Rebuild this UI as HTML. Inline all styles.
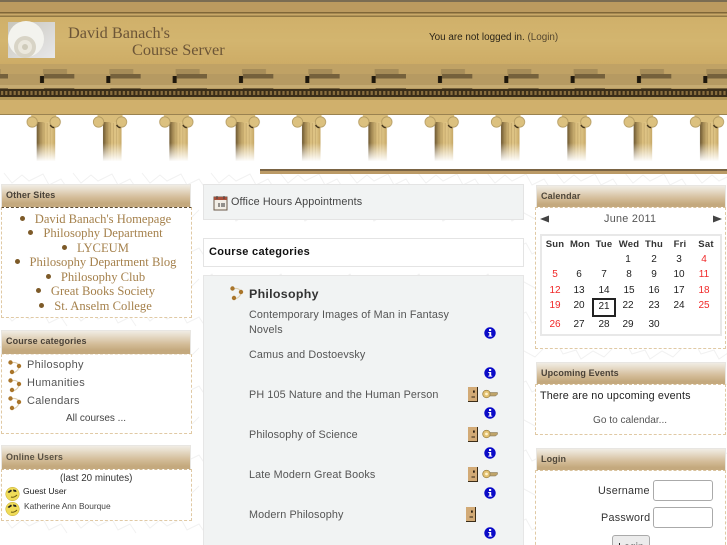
<!DOCTYPE html>
<html><head><meta charset="utf-8"><title>David Banach's Course Server</title>
<style>
html,body{margin:0;padding:0;background:#fff}
body{width:727px;height:545px;overflow:hidden;position:relative;font-family:"Liberation Sans",sans-serif;color:#222}
#p{position:absolute;left:0;top:0;width:727px;height:545px;overflow:hidden;filter:blur(.35px)}
.a{position:absolute}
.t{position:absolute;white-space:nowrap;line-height:14px}
.h{position:absolute;background:linear-gradient(#f0ece4 0,#e9e0d0 15%,#d3bc98 55%,#c4a97e 80%,#c4a97e 100%);border:1px solid #e8e6e2;border-bottom:0;box-sizing:border-box;font-weight:bold;font-size:9px;letter-spacing:.12px;color:#4a4238;padding-left:4px;line-height:21px}
.b{position:absolute;background:#fff;border:1px dashed #e0c9a4;border-top:1px dashed #5a4a32;box-sizing:border-box}
.c{font-family:"Liberation Serif",serif;font-size:12.6px;color:#a5814c;text-align:center;width:190px;left:.5px}
.c i{display:inline-block;width:5px;height:5px;border-radius:50%;background:#7d5a28;margin-right:10px;vertical-align:2px}
.g{font-size:11px;color:#555;letter-spacing:.3px}
.m{font-size:10.8px;letter-spacing:.12px;color:#555}
.d{position:absolute;font-size:10px;color:#222;width:24px;text-align:center;line-height:12px}
.d.w{font-size:9.5px}
.r{color:#f02828}
.w{font-weight:bold;color:#333;letter-spacing:.2px}
svg{position:absolute;display:block}
</style></head><body><div id="p">
<svg width="727" height="545" style="left:0;top:0">
<defs>
<pattern id="bg" width="69" height="69" patternUnits="userSpaceOnUse" x="0" y="165">
<path d="M4 8l8 10 10-8 7 6 14-7 6 11 12-6 6 9M-4 48l9-8 6 11 13-4 5 9 12-8 11 6 9-9" fill="none" stroke="#f1f1f1" stroke-width="1"/>
</pattern>
<linearGradient id="wall" x1="0" y1="0" x2="0" y2="1">
<stop offset="0" stop-color="#d0b06a"/><stop offset=".5" stop-color="#d3b56f"/><stop offset="1" stop-color="#cdac66"/>
</linearGradient>
<linearGradient id="fade" x1="0" y1="0" x2="0" y2="1">
<stop offset="0" stop-color="#fff" stop-opacity="0"/><stop offset="1" stop-color="#fff" stop-opacity="1"/>
</linearGradient>
<linearGradient id="shaft" x1="0" y1="0" x2="1" y2="0">
<stop offset="0" stop-color="#6b5630"/><stop offset=".2" stop-color="#a98f58"/><stop offset=".45" stop-color="#d9bd7c"/><stop offset=".75" stop-color="#e0c688"/><stop offset="1" stop-color="#c6a866"/>
</linearGradient>
<pattern id="col" width="66.33" height="60" patternUnits="userSpaceOnUse" x="10.2" y="115">
<rect x="26.500" y="6" width="18.500" height="40" fill="url(#shaft)"/>
<path d="M31 8v38M34 8v38M37 8v38M40 8v38" stroke="#a58a52" stroke-width=".6" opacity=".6"/>
<rect x="21" y="0" width="25" height="7" fill="#d9bd7b"/>
<circle cx="22" cy="7" r="5.200" fill="#dcc17f" stroke="#b39a60" stroke-width=".8"/>
<circle cx="45" cy="7" r="5.200" fill="#dcc17f" stroke="#b39a60" stroke-width=".8"/>
<path d="M40 10q2 3 4 2.500" stroke="#3d2f18" stroke-width="1.300" fill="none"/>
<rect x="25" y="28" width="21" height="18.500" fill="url(#fade)"/>
</pattern>
<pattern id="dent" width="66.33" height="14" patternUnits="userSpaceOnUse" x="8" y="74">
<rect width="66.33" height="14" fill="#b69a62"/>
<rect x="36" y="0" width="32" height="4.500" fill="#75613c"/>
<rect x="32" y="2" width="4" height="7" fill="#1f180c"/>
<rect x="0" y="11" width="66.33" height="3" fill="#c6ab72"/>
</pattern>
<pattern id="shade" width="66.33" height="10" patternUnits="userSpaceOnUse" x="8" y="64">
<rect width="66.33" height="10" fill="#c0a265"/>
<rect x="35" y="5" width="24" height="5" fill="#a68c58"/>
</pattern>
<pattern id="bead" width="4.2" height="8" patternUnits="userSpaceOnUse" y="89">
<rect width="4.2" height="8" fill="#3a2d18"/><rect x="1" y="2" width="2.200" height="4" fill="#8a6f3f"/>
</pattern>
<linearGradient id="shl" x1="0" y1="0" x2="1" y2="1"><stop offset="0" stop-color="#c8c6bc"/><stop offset="1" stop-color="#e8e8ea"/></linearGradient>
</defs>
<rect width="727" height="545" fill="#fff"/>
<rect y="165" width="727" height="380" fill="url(#bg)"/>
<rect width="727" height="2" fill="#7a6c52"/>
<rect y="2" width="727" height="10" fill="#bb9a5f"/>
<rect y="12" width="727" height="1.500" fill="#7f6638"/>
<rect y="13.500" width="727" height="2" fill="#c9a868"/>
<rect y="15.500" width="727" height="1.500" fill="#917844"/>
<rect y="17" width="727" height="47" fill="url(#wall)"/>
<rect y="64" width="727" height="10" fill="url(#shade)"/>
<rect y="74" width="727" height="15" fill="url(#dent)"/>
<rect y="89" width="727" height="8" fill="url(#bead)"/>
<rect y="97" width="727" height="3" fill="#b39759"/>
<rect y="100" width="727" height="14" fill="#d0b06c"/>
<rect y="114" width="727" height="1" fill="#9a8250"/>
<rect y="115" width="727" height="50" fill="url(#col)"/>
<rect x="260" y="169" width="467" height="2" fill="#7a6444"/>
<rect x="260" y="171" width="467" height="3" fill="#bb9a66"/>
<!-- shell -->
<rect x="8" y="22" width="47" height="36" fill="url(#shl)"/>
<circle cx="26" cy="39" r="18" fill="#f3f3ee"/>
<circle cx="25" cy="47" r="11" fill="#d8d4c6"/>
<circle cx="25" cy="47" r="7" fill="#ebe8dd"/>
<circle cx="25" cy="47" r="3" fill="#cfcbba"/>
</svg>

<div class="t" style="left:68px;top:25px;font:16.3px/16px 'Liberation Serif',serif;color:#6c5537">David Banach's</div>
<div class="t" style="left:132px;top:42px;font:16.3px/16px 'Liberation Serif',serif;color:#6c5537">Course Server</div>
<div class="t" style="left:429px;top:31px;font-size:9.9px;color:#2a2418">You are not logged in. <span style="color:#55472f">(Login)</span></div>

<!-- LEFT -->
<div class="h" style="left:1px;top:184px;width:190px;height:24px">Other Sites</div>
<div class="b" style="left:1px;top:207px;width:191px;height:111px"></div>
<div class="t c" style="top:212px"><i></i>David Banach's Homepage</div>
<div class="t c" style="top:226px"><i></i>Philosophy Department</div>
<div class="t c" style="top:241px"><i></i>LYCEUM</div>
<div class="t c" style="top:255px"><i></i>Philosophy Department Blog</div>
<div class="t c" style="top:270px"><i></i>Philosophy Club</div>
<div class="t c" style="top:284px"><i></i>Great Books Society</div>
<div class="t c" style="top:299px"><i></i>St. Anselm College</div>

<div class="h" style="left:1px;top:330px;width:190px;height:25px">Course categories</div>
<div class="b" style="left:1px;top:354px;width:191px;height:80px;border-top-color:#eee4d4"></div>
<svg width="16" height="16" style="left:7px;top:359px"><use href="#cat"/></svg>
<svg width="16" height="16" style="left:7px;top:377px"><use href="#cat"/></svg>
<svg width="16" height="16" style="left:7px;top:395px"><use href="#cat"/></svg>
<div class="t g" style="left:27px;top:358px">Philosophy</div>
<div class="t g" style="left:27px;top:376px">Humanities</div>
<div class="t g" style="left:27px;top:394px">Calendars</div>
<div class="t" style="left:66px;top:412px;font-size:10px;color:#444">All courses ...</div>

<div class="h" style="left:1px;top:445px;width:190px;height:26px;color:#5a5244;line-height:23px">Online Users</div>
<div class="b" style="left:1px;top:469px;width:191px;height:52px;border-top-color:#d2bb94"></div>
<div class="t" style="left:60px;top:472px;font-size:9.8px;color:#333">(last 20 minutes)</div>
<svg width="16" height="16" style="left:5px;top:486px"><use href="#sm"/></svg>
<svg width="16" height="16" style="left:5px;top:501px"><use href="#sm"/></svg>
<div class="t" style="left:23px;top:484px;font-size:8.6px;color:#222">Guest User</div>
<div class="t" style="left:24px;top:499px;font-size:8.4px;color:#444">Katherine Ann Bourque</div>

<!-- MIDDLE -->
<div class="a" style="left:203px;top:184px;width:321px;height:36px;background:#f1f3f3;border:1px solid #e4e4e4;box-sizing:border-box"></div>
<svg width="16" height="16" style="left:213px;top:195px" viewBox="0 0 16 16"><rect x="1" y="2" width="13" height="13" fill="#f2eee6" stroke="#6b5a48"/><rect x="1" y="2" width="13" height="3" fill="#a8503c"/><path d="M4 1v3M11 1v3" stroke="#444"/><path d="M6 8v4M9 8v4M11 8v4" stroke="#333"/></svg>
<div class="t" style="left:231px;top:195px;font-size:10.8px;color:#444;letter-spacing:.12px">Office Hours Appointments</div>

<div class="a" style="left:203px;top:238px;width:321px;height:29px;background:#fff;border:1px solid #e4e4e4;box-sizing:border-box"></div>
<div class="t" style="left:209px;top:245px;font-size:11px;font-weight:bold;color:#111;letter-spacing:.3px">Course categories</div>

<div class="a" style="left:203px;top:275px;width:321px;height:270px;background:#f1f3f3;border:1px solid #e6e6e6;border-bottom:0;box-sizing:border-box"></div>
<svg width="16" height="16" style="left:229px;top:285px"><use href="#cat"/></svg>
<div class="t" style="left:249px;top:287px;font-size:12.4px;font-weight:bold;color:#333;letter-spacing:.3px">Philosophy</div>
<div class="t m" style="left:249px;top:308px">Contemporary Images of Man in Fantasy</div>
<div class="t m" style="left:249px;top:323px">Novels</div>
<div class="t m" style="left:249px;top:348px">Camus and Dostoevsky</div>
<div class="t m" style="left:249px;top:388px">PH 105 Nature and the Human Person</div>
<div class="t m" style="left:249px;top:428px">Philosophy of Science</div>
<div class="t m" style="left:249px;top:468px">Late Modern Great Books</div>
<div class="t m" style="left:249px;top:508px">Modern Philosophy</div>

<svg width="12" height="12" style="left:484px;top:327px"><use href="#inf"/></svg>
<svg width="12" height="12" style="left:484px;top:367px"><use href="#inf"/></svg>
<svg width="12" height="12" style="left:484px;top:407px"><use href="#inf"/></svg>
<svg width="12" height="12" style="left:484px;top:447px"><use href="#inf"/></svg>
<svg width="12" height="12" style="left:484px;top:487px"><use href="#inf"/></svg>
<svg width="12" height="12" style="left:484px;top:527px"><use href="#inf"/></svg>
<svg width="11" height="15" style="left:468px;top:387px"><use href="#door"/></svg>
<svg width="11" height="15" style="left:468px;top:427px"><use href="#door"/></svg>
<svg width="11" height="15" style="left:468px;top:467px"><use href="#door"/></svg>
<svg width="11" height="15" style="left:466px;top:507px"><use href="#door"/></svg>
<svg width="16" height="10" style="left:482px;top:389px"><use href="#key"/></svg>
<svg width="16" height="10" style="left:482px;top:429px"><use href="#key"/></svg>
<svg width="16" height="10" style="left:482px;top:469px"><use href="#key"/></svg>

<!-- RIGHT -->
<div class="h" style="left:536px;top:185px;width:190px;height:24px;line-height:20px;color:#4f473a">Calendar</div>
<div class="b" style="left:535px;top:207px;width:191px;height:142px;border-top-color:#d9c29c"></div>
<svg width="10" height="8" style="left:540px;top:215px"><path d="M0 4L9 .5V7.500z" fill="#444"/></svg>
<svg width="10" height="8" style="left:713px;top:215px"><path d="M9 4L0 .5V7.500z" fill="#444"/></svg>
<div class="t" style="left:604px;top:212px;font-size:10.8px;color:#555;letter-spacing:.3px">June 2011</div>
<div class="a" style="left:540px;top:234px;width:182px;height:102px;background:#fff;border:2px solid #e8e8e8;box-sizing:border-box"></div>
<div class="d w" style="left:543px;top:239px">Sun</div>
<div class="d w" style="left:568px;top:239px">Mon</div>
<div class="d w" style="left:592px;top:239px">Tue</div>
<div class="d w" style="left:617px;top:239px">Wed</div>
<div class="d w" style="left:642px;top:239px">Thu</div>
<div class="d w" style="left:668px;top:239px">Fri</div>
<div class="d w" style="left:694px;top:239px">Sat</div>
<div class="d" style="left:616px;top:254px">1</div><div class="d" style="left:642px;top:254px">2</div><div class="d" style="left:667px;top:254px">3</div><div class="d r" style="left:692px;top:254px">4</div>
<div class="d r" style="left:543px;top:269px">5</div><div class="d" style="left:567px;top:269px">6</div><div class="d" style="left:592px;top:269px">7</div><div class="d" style="left:617px;top:269px">8</div><div class="d" style="left:642px;top:269px">9</div><div class="d" style="left:667px;top:269px">10</div><div class="d r" style="left:692px;top:269px">11</div>
<div class="d r" style="left:543px;top:285px">12</div><div class="d" style="left:567px;top:285px">13</div><div class="d" style="left:592px;top:285px">14</div><div class="d" style="left:617px;top:285px">15</div><div class="d" style="left:642px;top:285px">16</div><div class="d" style="left:667px;top:285px">17</div><div class="d r" style="left:692px;top:285px">18</div>
<div class="d r" style="left:543px;top:300px">19</div><div class="d" style="left:567px;top:300px">20</div><div class="a" style="left:592px;top:298px;width:24px;height:18.500px;border:2px solid #222;box-sizing:border-box"></div><div class="d" style="left:592px;top:301px">21</div><div class="d" style="left:616px;top:300px">22</div><div class="d" style="left:642px;top:300px">23</div><div class="d" style="left:667px;top:300px">24</div><div class="d r" style="left:692px;top:300px">25</div>
<div class="d r" style="left:543px;top:319px">26</div><div class="d" style="left:567px;top:319px">27</div><div class="d" style="left:592px;top:319px">28</div><div class="d" style="left:616px;top:319px">29</div><div class="d" style="left:642px;top:319px">30</div>

<div class="h" style="left:536px;top:362px;width:190px;height:24px;line-height:20px">Upcoming Events</div>
<div class="b" style="left:535px;top:384px;width:191px;height:51px;border-top-color:#d9c29c"></div>
<div class="t" style="left:540px;top:389px;font-size:10.8px;color:#222;letter-spacing:.15px">There are no upcoming events</div>
<div class="t" style="left:593px;top:414px;font-size:10.1px;color:#555">Go to calendar...</div>

<div class="h" style="left:536px;top:448px;width:190px;height:24px;line-height:21px;color:#4f473a">Login</div>
<div class="b" style="left:535px;top:470px;width:191px;height:80px;border-top-color:#d9c29c"></div>
<div class="t" style="left:598px;top:484px;font-size:10.8px;color:#333;letter-spacing:.25px">Username</div>
<div class="t" style="left:601px;top:511px;font-size:10.8px;color:#333;letter-spacing:.25px">Password</div>
<div class="a" style="left:653px;top:480px;width:60px;height:21px;background:#fff;border:1px solid #aaa;border-radius:3px;box-sizing:border-box"></div>
<div class="a" style="left:653px;top:507px;width:60px;height:21px;background:#fff;border:1px solid #aaa;border-radius:3px;box-sizing:border-box"></div>
<div class="a" style="left:612px;top:535px;width:38px;height:24px;background:#ececec;border:1px solid #aaa;border-radius:3px;box-sizing:border-box;font-size:10.5px;text-align:center;line-height:22px;color:#222">Login</div>

<svg width="0" height="0" style="left:0;top:0">
<defs>
<g id="cat"><path d="M4 4q6-2 8 3q0 5-6 7" fill="none" stroke="#dccdae" stroke-width="1"/><circle cx="3.500" cy="3.500" r="2.200" fill="#a9752a"/><circle cx="12" cy="7" r="2.200" fill="#a9752a"/><circle cx="5" cy="13" r="2.200" fill="#a9752a"/></g>
<g id="inf"><circle cx="6" cy="6" r="5.700" fill="#0a0ac8"/><rect x="5" y="2" width="2.200" height="2" fill="#fff"/><path d="M4.300 5h2.900v3.600h1v1H4.300v-1h1V6H4.300z" fill="#fff"/></g>
<g id="door"><rect x="0" y="0" width="9.500" height="14" fill="#d2aa76"/><path d="M9.500 0v14.500H0" fill="none" stroke="#3a2c18" stroke-width="1"/><rect x="5" y="3.500" width="1.800" height="2.200" fill="#2e2212"/><path d="M3.500 10h3.500" stroke="#2e2212"/></g>
<g id="key"><circle cx="4.500" cy="5" r="3.800" fill="#e4c272" stroke="#8f7434" stroke-width=".7"/><circle cx="4.500" cy="5" r="1.400" fill="#fff4cc"/><path d="M8 3.500h7.500v1.800l-2 1.700H8z" fill="#bfa46a" stroke="#7a6c50" stroke-width=".5"/></g>
<g id="sm"><circle cx="7.500" cy="8" r="6.800" fill="#f0dc58" stroke="#c4ac38" stroke-width=".5"/><path d="M2.500 6l3.500-2.500 1 1.500-3 2z" fill="#222"/><path d="M8 3.500l3 .5.500 2-3-.5z" fill="#222"/><path d="M6 11q3 1 6-2" stroke="#6d5d14" fill="none"/></g>
</defs>
</svg>
</div></body></html>
